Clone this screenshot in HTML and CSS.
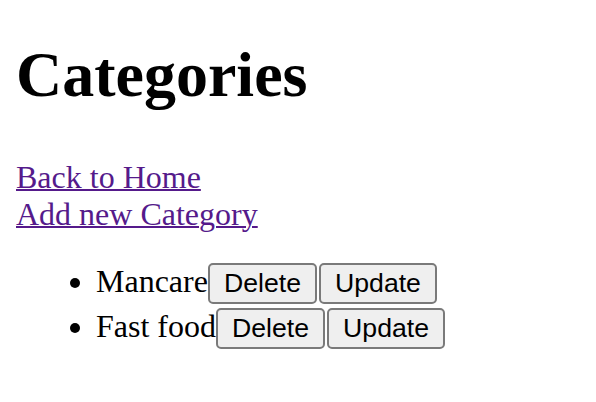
FILE: index.html
```html
<!DOCTYPE html>
<html>
<head>
<meta charset="utf-8">
<title>Categories</title>
<link rel="stylesheet" href="styles.css">
</head>
<body>
<h1 class="title">Categories</h1>
<nav class="links">
<a class="link" href="#">Back to Home</a>
<a class="link" href="#">Add new Category</a>
</nav>
<ul class="list">
<li class="item">Mancare<button class="btn">Delete</button><button class="btn">Update</button></li>
<li class="item">Fast food<button class="btn">Delete</button><button class="btn">Update</button></li>
</ul>
</body>
</html>
```
FILE: styles.css
```css
html, body {
  background: #fff;
}
body {
  margin: 0;
  padding: 16px;
  font-family: "Liberation Serif", "Times New Roman", serif;
  font-size: 32px;
  color: #000;
}
.title {
  font-size: 64px;
  font-weight: bold;
  margin: 22px 0 47px;
  line-height: 74px;
}
.links {
  display: flex;
  flex-direction: column;
  line-height: 37px;
}
.link {
  color: #551a8b;
  text-decoration: underline;
  text-decoration-thickness: 2px;
  align-self: flex-start;
}
.list {
  margin: 26px 0;
  padding-left: 80px;
  line-height: 44px;
}
.item {
  margin: 0;
}
.btn {
  font-family: "Liberation Sans", Arial, sans-serif;
  font-size: 26.67px;
  color: #000;
  background: #efefef;
  border: 2px solid #7a7a7a;
  border-radius: 5px;
  padding: 0 14px;
  height: 41px;
  margin: 0 1px 0 0;
  vertical-align: baseline;
}
.btn + .btn {
  margin-left: 1px;
}
```
